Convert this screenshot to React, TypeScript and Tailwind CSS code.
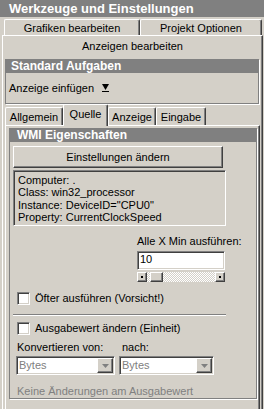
import React from 'react';

const raised =
	'border-t border-l border-t-white border-l-white border-r border-b border-r-[#404040] border-b-[#404040] shadow-[inset_-1px_-1px_0_#808080]';
const sunken =
	'border-t border-l border-t-[#808080] border-l-[#808080] border-r border-b border-r-white border-b-white shadow-[inset_1px_1px_0_#404040,inset_-1px_-1px_0_#d4d0c8]';
const tab =
	'border-t border-l border-r border-t-white border-l-white border-r-[#404040] shadow-[inset_-1px_0_0_#808080] rounded-t-[2px] text-center';

function Checkbox({ label }: { label: string }) {
	return (
		<div className="flex h-[13px] items-center gap-[5px]">
			<div className={`h-[13px] w-[13px] shrink-0 bg-white ${sunken}`} />
			<span className="leading-[13px]">{label}</span>
		</div>
	);
}

function Select({ width }: { width: string }) {
	return (
		<div className={`flex h-[19px] items-center bg-white ${sunken} ${width}`}>
			<span className="flex-1 pl-[2px] text-[#808080] leading-[15px]">Bytes</span>
			<div className={`mr-[1px] flex h-[15px] w-[16px] items-center justify-center bg-[#d4d0c8] ${raised}`}>
				<svg width="7" height="4" viewBox="0 0 7 4">
					<polygon points="0,0 7,0 3.5,4" fill="#808080" />
				</svg>
			</div>
		</div>
	);
}

function ScrollButton() {
	return (
		<div className={`flex h-[10px] w-[10px] items-center justify-center bg-[#d4d0c8] ${raised}`}>
			<div className="h-[2px] w-[2px] bg-black" />
		</div>
	);
}

export default function App() {
	return (
		<div className="h-[409px] w-[264px] overflow-hidden bg-[#d4d0c8] font-['Liberation_Sans',Arial,sans-serif] text-[11px] text-black">
			{/* TITLE */}
			<div className="h-[17px] bg-[#808080] pl-[9px] text-[13px] font-bold leading-[17px] text-white">
				Werkzeuge und Einstellungen
			</div>

			{/* TOP TABS */}
			<div className="mt-[2px] flex h-[16px] pl-[4px]">
				<div className={`${tab} w-[136px] leading-[16px]`}>Grafiken bearbeiten</div>
				<div className={`${tab} w-[122px] leading-[16px]`}>Projekt Optionen</div>
			</div>

			{/* ANZEIGEN BEARBEITEN PAGE */}
			<div className="ml-[2px] flex h-[374px] w-[261px] flex-col border-t border-l border-r border-t-white border-l-white border-r-[#404040] shadow-[inset_-1px_0_0_#808080]">
				<div className="h-[20px] text-center leading-[20px]">Anzeigen bearbeiten</div>

				{/* STANDARD AUFGABEN */}
				<div className="mt-[3px] ml-[2px] h-[45px] w-[254px] border border-[#808080] shadow-[1px_1px_0_#fff]">
					<div className="h-[13px] bg-[#808080] pl-[5px] text-[12px] font-bold leading-[13px] text-white">
						Standard Aufgaben
					</div>
					<div className="flex h-[30px] items-center gap-[8px] pl-[3px]">
						<span>Anzeige einfügen</span>
						<svg width="7" height="10" viewBox="0 0 7 10">
							<polygon points="0,1 7,1 3.5,7" fill="#000" />
							<rect x="0" y="8" width="7" height="1" fill="#000" />
						</svg>
					</div>
				</div>

				{/* SUB TABS */}
				<div className="relative z-10 ml-[2px] flex h-[21px] items-end">
					<div className={`${tab} h-[18px] w-[58px] leading-[18px]`}>Allgemein</div>
					<div className={`${tab} -mb-[1px] h-[22px] w-[45px] bg-[#d4d0c8] leading-[18px]`}>Quelle</div>
					<div className={`${tab} h-[18px] w-[48px] leading-[18px]`}>Anzeige</div>
					<div className={`${tab} h-[18px] w-[50px] leading-[18px]`}>Eingabe</div>
				</div>

				{/* TAB PANEL */}
				<div className="ml-[2px] w-[255px] flex-1 border-t border-l border-r border-t-white border-l-white border-r-[#404040] shadow-[inset_-1px_0_0_#808080]">
					{/* WMI GROUP */}
					<div className="mt-[2px] ml-[3px] h-[271px] w-[248px] border border-[#808080] shadow-[1px_1px_0_#fff]">
						<div className="h-[13px] bg-[#808080] pl-[7px] text-[12px] font-bold leading-[13px] text-white">
							WMI Eigenschaften
						</div>

						<div className={`mt-[4px] ml-[3px] flex h-[22px] w-[210px] items-center justify-center ${raised}`}>
							Einstellungen ändern
						</div>

						<div className={`mt-[2px] ml-[3px] h-[56px] w-[213px] pt-[3px] pl-[4px] leading-[12.3px] ${sunken}`}>
							<div>Computer: .</div>
							<div>Class: win32_processor</div>
							<div>Instance: DeviceID="CPU0"</div>
							<div>Property: CurrentClockSpeed</div>
						</div>

						<div className="mt-[9px] ml-[127px] h-[12px] leading-[12px]">Alle X Min ausführen:</div>
						<div className={`mt-[4px] ml-[127px] h-[19px] w-[88px] bg-white pl-[2px] leading-[15px] ${sunken}`}>10</div>
						<div className="mt-[2px] ml-[127px] flex h-[10px] w-[88px] items-center bg-[image:repeating-conic-gradient(#ffffff_0%_25%,#d4d0c8_0%_50%)] bg-[length:2px_2px]">
							<ScrollButton />
							<div className={`ml-[3px] h-[10px] w-[13px] bg-[#d4d0c8] ${raised}`} />
							<div className="flex-1" />
							<ScrollButton />
						</div>

						<div className="mt-[10px] ml-[7px]">
							<Checkbox label="Öfter ausführen (Vorsicht!)" />
						</div>

						<div className="mt-[9px] ml-[3px] h-[2px] w-[213px] border-t border-b border-t-[#808080] border-b-white" />

						<div className="mt-[6px] ml-[7px]">
							<Checkbox label="Ausgabewert ändern (Einheit)" />
						</div>

						<div className="mt-[6px] ml-[7px] flex h-[12px] leading-[12px]">
							<span className="w-[105px]">Konvertieren von:</span>
							<span>nach:</span>
						</div>

						<div className="mt-[3px] ml-[6px] flex gap-[4px]">
							<Select width="w-[99px]" />
							<Select width="w-[95px]" />
						</div>

						<div className="mt-[10px] ml-[7px] h-[12px] leading-[12px] text-[#808080]">
							Keine Änderungen am Ausgabewert
						</div>
					</div>
				</div>
			</div>
		</div>
	);
}
